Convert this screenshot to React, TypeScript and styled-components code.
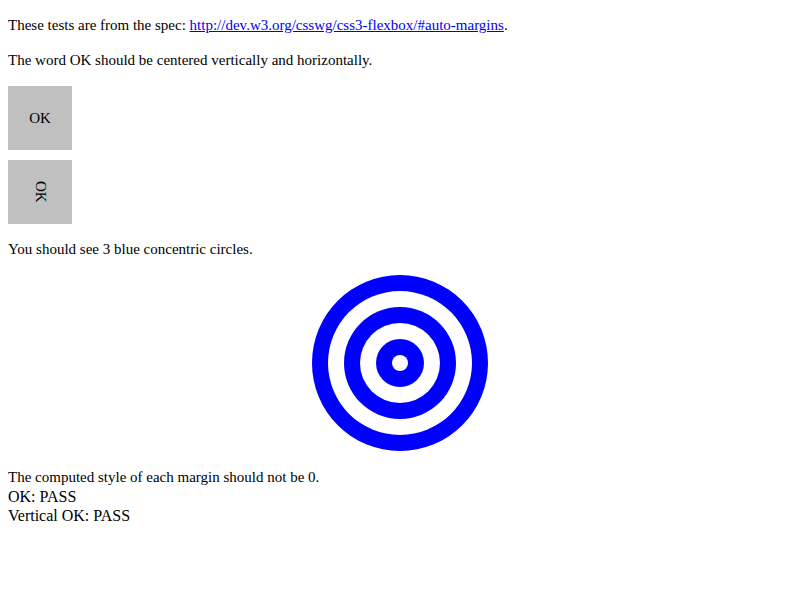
import React from "react";
import styled, { createGlobalStyle } from "styled-components";

const GlobalStyle = createGlobalStyle`
  body {
    margin: 0;
    background: #ffffff;
    color: #000000;
    font-family: "Liberation Serif", "Times New Roman", serif;
    font-size: 15px;
    line-height: 19px;
  }
`;

const Page = styled.div`
  padding: 0 8px 8px;
`;

const Para = styled.p`
  margin: 16px 0;
`;

const SpecLink = styled.a`
  color: #0000ee;
  text-decoration: underline;
`;

const OkBox = styled.div<{ $vertical?: boolean }>`
  display: flex;
  width: 64px;
  height: 64px;
  background: #c0c0c0;
  margin-bottom: 10px;
  writing-mode: ${(p) => (p.$vertical ? "vertical-rl" : "horizontal-tb")};
`;

const OkLabel = styled.div`
  margin: auto;
`;

const Target = styled.div`
  display: flex;
`;

const Ring = styled.div<{ $blue: boolean }>`
  display: flex;
  margin: auto;
  padding: 16px;
  border-radius: 50%;
  background: ${(p) => (p.$blue ? "#0000ff" : "#ffffff")};
`;

const Hole = styled.div`
  width: 16px;
  height: 16px;
  margin: auto;
  border-radius: 50%;
  background: #ffffff;
`;

const Results = styled.div`
  margin-top: 17px;
`;

const ResultLine = styled.div<{ $large?: boolean }>`
  font-size: ${(p) => (p.$large ? "16px" : "15px")};
`;

export default function App() {
  return (
    <Page>
      <GlobalStyle />
      <Para>
        These tests are from the spec:{" "}
        <SpecLink href="#">http://dev.w3.org/csswg/css3-flexbox/#auto-margins</SpecLink>.
      </Para>
      <Para>The word OK should be centered vertically and horizontally.</Para>
      <OkBox>
        <OkLabel>OK</OkLabel>
      </OkBox>
      <OkBox $vertical>
        <OkLabel>OK</OkLabel>
      </OkBox>
      <Para>You should see 3 blue concentric circles.</Para>
      <Target>
        <Ring $blue>
          <Ring $blue={false}>
            <Ring $blue>
              <Ring $blue={false}>
                <Ring $blue>
                  <Hole />
                </Ring>
              </Ring>
            </Ring>
          </Ring>
        </Ring>
      </Target>
      <Results>
        <ResultLine>The computed style of each margin should not be 0.</ResultLine>
        <ResultLine $large>OK: PASS</ResultLine>
        <ResultLine $large>Vertical OK: PASS</ResultLine>
      </Results>
    </Page>
  );
}
